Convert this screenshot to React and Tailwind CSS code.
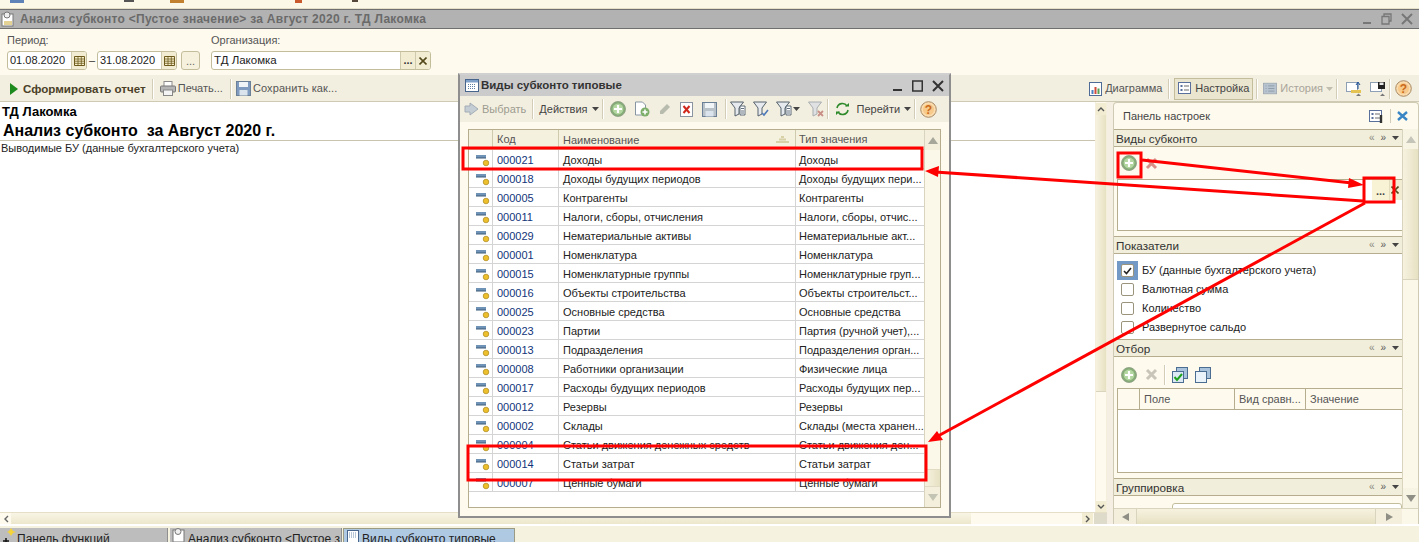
import React from "react";

const rows = [
  ["000021", "Доходы", "Доходы"],
  ["000018", "Доходы будущих периодов", "Доходы будущих пери..."],
  ["000005", "Контрагенты", "Контрагенты"],
  ["000011", "Налоги, сборы, отчисления", "Налоги, сборы, отчис..."],
  ["000029", "Нематериальные активы", "Нематериальные акт..."],
  ["000001", "Номенклатура", "Номенклатура"],
  ["000015", "Номенклатурные группы", "Номенклатурные груп..."],
  ["000016", "Объекты строительства", "Объекты строительст..."],
  ["000025", "Основные средства", "Основные средства"],
  ["000023", "Партии", "Партия (ручной учет),..."],
  ["000013", "Подразделения", "Подразделения орган..."],
  ["000008", "Работники организации", "Физические лица"],
  ["000017", "Расходы будущих периодов", "Расходы будущих пер..."],
  ["000012", "Резервы", "Резервы"],
  ["000002", "Склады", "Склады (места хранен..."],
  ["000004", "Статьи движения денежных средств", "Статьи движения ден..."],
  ["000014", "Статьи затрат", "Статьи затрат"],
  ["000007", "Ценные бумаги", "Ценные бумаги"],
];

const Plus = () => (
  <svg width="16" height="16" viewBox="0 0 16 16" className="shrink-0">
    <circle cx="8" cy="8" r="7.5" fill="#86ad78" stroke="#8a9a80" strokeWidth="0.8" />
    <circle cx="8" cy="8" r="5.4" fill="#b4d6a0" />
    <path d="M8 4v8M4 8h8" stroke="#fff" strokeWidth="2.2" />
  </svg>
);
const Cross = ({ color = "#d98f86" }) => (
  <svg width="13" height="13" viewBox="0 0 13 13" className="shrink-0">
    <path d="M2 2l9 9M11 2l-9 9" stroke={color} strokeWidth="3" />
  </svg>
);
const Calendar = () => (
  <svg width="11" height="11" viewBox="0 0 11 11">
    <path d="M0.5 1.5h10v9h-10z" fill="#f6edc9" stroke="#6d5a1c" />
    <path d="M0.5 4h10M0.5 6.2h10M0.5 8.3h10M4 1.5v9M7.3 1.5v9" stroke="#6d5a1c" strokeWidth="0.8" />
  </svg>
);
const RowIcon = () => (
  <svg width="15" height="15" viewBox="0 0 15 15" className="shrink-0">
    <rect x="0" y="3" width="10" height="3" fill="#6f93b7" />
    <rect x="0" y="5.5" width="10" height="1" fill="#3d5a78" />
    <circle cx="10" cy="11" r="2.8" fill="#eebf2c" stroke="#a8861c" strokeWidth="0.7" />
  </svg>
);
const Help = () => (
  <svg width="17" height="17" viewBox="0 0 17 17" className="shrink-0">
    <circle cx="8.5" cy="8.5" r="7.8" fill="#fbdcae" stroke="#a88a66" />
    <circle cx="8.5" cy="8.5" r="5.5" fill="#f7c98a" />
    <text x="8.5" y="12.6" textAnchor="middle" fontSize="12" fontWeight="700" fill="#c9691c" fontFamily="Liberation Sans">?</text>
  </svg>
);
const Disk = ({ c = "#7f9cc0" }) => (
  <svg width="15" height="15" viewBox="0 0 15 15" className="shrink-0">
    <rect x="0.5" y="0.5" width="14" height="14" fill={c} stroke="#6b7f96" />
    <rect x="3" y="1" width="9" height="5" fill="#f2f5f8" />
    <rect x="3.5" y="9" width="8" height="5.5" fill="#dbe3ec" />
  </svg>
);
const Printer = () => (
  <svg width="16" height="15" viewBox="0 0 16 15" className="shrink-0">
    <rect x="4" y="0.5" width="8" height="5" fill="#fff" stroke="#8b8b8b" />
    <rect x="0.5" y="5" width="15" height="6" rx="1" fill="#b5b5b5" stroke="#777" />
    <rect x="3.5" y="9" width="9" height="5.5" fill="#f4f4f4" stroke="#888" />
  </svg>
);
const Diagram = () => (
  <svg width="13" height="14" viewBox="0 0 13 14" className="shrink-0">
    <rect x="0.5" y="0.5" width="12" height="13" fill="#fff" stroke="#4d6b96" />
    <rect x="2.5" y="8" width="2" height="4" fill="#4a7fc0" />
    <rect x="5.5" y="5" width="2" height="7" fill="#d14b3c" />
    <rect x="8.5" y="6.5" width="2" height="5.5" fill="#5aa050" />
  </svg>
);
const Settings = ({ wrench }) => (
  <svg width="15" height="13" viewBox="0 0 15 13" className="shrink-0">
    <rect x="0.5" y="0.5" width="12" height="11" fill="#fff" stroke="#5a6f9c" />
    <path d="M2.5 3h2v2h-2zM2.5 7h2v2h-2z" fill="#5a6f9c" />
    <path d="M6 4h5M6 8h5" stroke="#6a6a6a" />
    {wrench && <path d="M12 5v8" stroke="#333" strokeWidth="2.4" />}
  </svg>
);
const Funnel = ({ mark, dim }) => (
  <svg width="16" height="16" viewBox="0 0 16 16" className="shrink-0">
    <path d="M0.5 1h13l-4.5 6v6l-4 2V7z" fill={dim ? "#dfe1e3" : "#e6eaee"} stroke={dim ? "#a9adb1" : "#55616d"} />
    {mark === "x" && <path d="M10 10l5 5M15 10l-5 5" stroke="#c98f86" strokeWidth="1.8" />}
    {mark === "check" && <path d="M9 12l2 2 4-5" stroke="#4f79b8" strokeWidth="1.6" fill="none" />}
    {mark === "list" && <path d="M10 5h5v9h-5zM11 7.5h3M11 10h3M11 12h3" stroke="#39495a" fill="#fff" strokeWidth="0.8" />}
  </svg>
);
const Sep = () => <div className="h-[20px] w-[2px] border-l border-[#d3cdb8] bg-white mx-[3px] shrink-0" />;
const Caret = ({ c = "#444" }) => (
  <svg width="7" height="4" viewBox="0 0 7 4" className="shrink-0"><path d="M0 0h7L3.5 4z" fill={c} /></svg>
);

const SectionHead = ({ title }) => (
  <div className="h-[16px] flex items-center justify-between bg-[#f1eedb] border-y border-[#b5ad8d] box-content text-[11.7px] text-[#333] pl-[2px] pr-[3px] shrink-0 leading-[17px]">
    <span className="pt-[1px]">{title}</span>
    <span className="flex items-center gap-[6px] text-[10px] leading-none text-[#555]">
      <span className="text-[#8a8a80]">«</span><span>»</span><Caret />
    </span>
  </div>
);

const Checkbox = ({ label, checked }) => (
  <div className="h-[19px] flex items-center text-[11px] text-[#222]">
    <span className={`w-[21px] h-[19px] ml-[3px] flex items-center justify-center ${checked ? "bg-[#7399c6]" : ""}`}>
      <span className="w-[13px] h-[13px] border border-[#9a947c] rounded-[2px] bg-white flex items-center justify-center">
        {checked && (
          <svg width="9" height="8" viewBox="0 0 9 8"><path d="M1 4l2.5 2.5L8 1" stroke="#222" strokeWidth="1.6" fill="none" /></svg>
        )}
      </span>
    </span>
    <span className="ml-[4px]">{label}</span>
  </div>
);

const Dialog = () => (
  <div className="absolute left-[458px] top-[73px] w-[493px] h-[445px] flex flex-col border-2 border-[#8e8e8e] border-t-[#d0d0d0] bg-[#fefaee]">
    <div className="h-[21px] flex items-center bg-[#cbcbcb] pl-[5px] pr-[5px] shrink-0">
      <svg width="14" height="13" viewBox="0 0 14 13" className="shrink-0">
        <rect x="0.5" y="0.5" width="13" height="12" fill="#fff" stroke="#46648c" />
        <rect x="1" y="1" width="12" height="2.5" fill="#7ea0c8" />
        <path d="M3 5.5h8M3 7.5h8M3 9.5h8" stroke="#5f7ea3" strokeDasharray="1 1" />
      </svg>
      <span className="ml-[2px] text-[11.5px] font-bold text-[#333]">Виды субконто типовые</span>
      <span className="ml-auto flex items-center gap-[9px]">
        <svg width="10" height="12" viewBox="0 0 10 12"><path d="M0 10h9" stroke="#333" strokeWidth="2" /></svg>
        <svg width="11" height="12" viewBox="0 0 11 12"><rect x="0.75" y="1" width="9.5" height="10" fill="none" stroke="#333" strokeWidth="1.5" /></svg>
        <svg width="12" height="12" viewBox="0 0 12 12"><path d="M1 1l10 10M11 1L1 11" stroke="#333" strokeWidth="2" /></svg>
      </span>
    </div>
    <div className="h-[26px] flex items-center bg-[#f3efe0] pl-[3px] text-[11px] shrink-0">
      <svg width="16" height="15" viewBox="0 0 16 15" className="shrink-0 ml-[1px]"><path d="M1 4h5V1l8 6-8 6v-3H1z" fill="#c5cdd4" stroke="#a2acb5" /></svg>
      <span className="ml-[2px] text-[#9c9c90]">Выбрать</span>
      <span className="ml-[3px]"><Sep /></span>
      <span className="ml-[2px] text-[#444]">Действия</span>
      <span className="ml-[4px]"><Caret /></span>
      <Sep />
      <span className="ml-[3px]"><Plus /></span>
      <svg width="16" height="16" viewBox="0 0 16 16" className="ml-[8px] shrink-0">
        <path d="M1.5 1h7l3 3v10h-10z" fill="#fff" stroke="#8795a3" />
        <circle cx="11" cy="11" r="4.5" fill="#7eaf6a" />
        <path d="M11 8.5v5M8.5 11h5" stroke="#fff" strokeWidth="1.6" />
      </svg>
      <svg width="14" height="14" viewBox="0 0 14 14" className="ml-[8px] shrink-0"><path d="M2 9l7-7 3 3-7 7H2z" fill="#b8bcae" /></svg>
      <svg width="13" height="15" viewBox="0 0 13 15" className="ml-[8px] shrink-0">
        <rect x="0.5" y="0.5" width="12" height="14" fill="#fff" stroke="#8a94a0" />
        <path d="M3.5 4l6 7M9.5 4l-6 7" stroke="#d0281c" strokeWidth="2" />
      </svg>
      <span className="ml-[9px]"><Disk c="#b9c1c9" /></span>
      <span className="ml-[5px]"><Sep /></span>
      <Funnel mark="list" />
      <span className="ml-[7px]"><Funnel mark="check" /></span>
      <span className="ml-[7px]"><Funnel mark="list" /></span>
      <span className="ml-[1px]"><Caret /></span>
      <span className="ml-[8px]"><Funnel mark="x" dim /></span>
      <Sep />
      <svg width="15" height="14" viewBox="0 0 15 14" className="ml-[3px] shrink-0">
        <path d="M2 6a5.5 5.5 0 0 1 10-2M13 8a5.5 5.5 0 0 1-10 2" stroke="#2f8a2c" strokeWidth="1.6" fill="none" />
        <path d="M10 4.5h4V1zM5 9.5H1V13z" fill="#2f8a2c" />
      </svg>
      <span className="ml-[7px] text-[#444]">Перейти</span>
      <span className="ml-[4px]"><Caret /></span>
      <Sep />
      <span className="ml-[1px]"><Help /></span>
    </div>
    <div className="flex-1 min-h-0 px-[8px] pt-[7px] pb-[8px]">
      <div className="h-full flex border border-[#b5ad8d] bg-white">
        <div className="flex-1 min-w-0 flex flex-col">
          <div className="h-[20px] flex bg-[#f5f1df] border-b border-[#cfc9ae] text-[11px] text-[#555] shrink-0">
            <div className="w-[24px] border-r border-[#cfc9ae]" />
            <div className="w-[66px] border-r border-[#cfc9ae] pl-[4px] leading-[18px]">Код</div>
            <div className="w-[237px] border-r border-[#cfc9ae] pl-[4px] leading-[18px] flex items-center justify-between pr-[6px]">
              <span>Наименование</span>
              <svg width="13" height="7" viewBox="0 0 13 7"><path d="M5 0h3v2H5zM3 2.5h7v2H3zM0 5h13v2H0z" fill="#d8d0a6" /></svg>
            </div>
            <div className="flex-1 pl-[3px] leading-[18px]">Тип значения</div>
          </div>
          {rows.map((r) => (
            <div key={r[0]} className="h-[19px] flex border-b border-[#d4d4d4] text-[11px] text-[#222] shrink-0 leading-[20px]">
              <div className="w-[24px] border-r border-[#d4d4d4] flex items-center pl-[7px]"><RowIcon /></div>
              <div className="w-[66px] border-r border-[#d4d4d4] pl-[4px] text-[#12357a]">{r[0]}</div>
              <div className="w-[237px] border-r border-[#d4d4d4] pl-[4px] whitespace-nowrap overflow-hidden">{r[1]}</div>
              <div className="flex-1 pl-[3px] whitespace-nowrap overflow-hidden">{r[2]}</div>
            </div>
          ))}
        </div>
        <div className="w-[16px] flex flex-col bg-[#f7f4e4] border-l border-[#d9d4bd] shrink-0">
          <div className="h-[20px] flex items-center justify-center bg-[#f3efdc]">
            <div className="w-0 h-0 border-x-[5px] border-x-transparent border-b-[7px] border-b-[#a6a69a]" />
          </div>
          <div className="flex-1 bg-[#fbf8ea]" />
          <div className="h-[18px] bg-gradient-to-r from-[#f6f2df] to-[#e7e1c3] border-y border-[#e0dbc2]" />
          <div className="h-[20px] flex items-center justify-center bg-[#f3efdc]">
            <div className="w-0 h-0 border-x-[5px] border-x-transparent border-t-[7px] border-t-[#c4c4b4]" />
          </div>
        </div>
      </div>
    </div>
  </div>
);

const Overlay = () => (
  <svg width="1419" height="542" viewBox="0 0 1419 542" className="absolute left-0 top-0 pointer-events-none">
    <g fill="none" stroke="#ff0000" strokeWidth="3">
      <rect x="463" y="148" width="459" height="21" />
      <rect x="468" y="446" width="458" height="34" />
      <rect x="1118" y="153" width="23" height="24" />
      <rect x="1364" y="178" width="30" height="24" />
      <path d="M1142 160L1352 183" />
      <path d="M1363 201L935 172" />
      <path d="M1365 203L938 436" />
    </g>
    <g fill="#ff0000">
      <path d="M1364 185L1349 178L1348 188z" />
      <path d="M925 171L939 166L938 177z" />
      <path d="M928 442L937 431L943 440z" />
    </g>
  </svg>
);

export default function App() {
  return (
    <div className="relative w-[1419px] h-[542px] overflow-hidden flex flex-col bg-[#f5f2e0] font-['Liberation_Sans',sans-serif]">
      <div className="h-[9px] bg-[#fbf8e8] border-b border-[#e3dfc8] flex items-start pl-[10px] shrink-0 overflow-hidden">
        <div className="w-[14px] h-[3px] bg-[#5d83b8]" />
        <div className="ml-[100px] w-[10px] h-[2px] bg-[#555]" />
        <div className="ml-[36px] w-[14px] h-[3px] bg-[#c2812e]" />
        <div className="ml-[111px] w-[7px] h-[3px] bg-[#c85a2e]" />
        <div className="ml-[50px] w-[6px] h-[2px] bg-[#55483a]" />
      </div>
      <div className="h-[20px] flex items-center bg-[#b2b2b2] border-y border-[#6f6f6f] shrink-0 pl-[1px] pr-[6px]">
        <svg width="16" height="16" viewBox="0 0 16 16" className="shrink-0">
          <rect x="1" y="3" width="11" height="12" fill="#fff" stroke="#777" />
          <circle cx="6" cy="4" r="3" fill="#eee" stroke="#777" />
          <path d="M3 11h8M3 13h8" stroke="#c9a52c" />
        </svg>
        <span className="ml-[3px] text-[12px] tracking-[0.27px] font-bold text-[#6a6a6a]">Анализ субконто &lt;Пустое значение&gt; за Август 2020 г. ТД Лакомка</span>
        <span className="ml-auto flex items-center gap-[9px]">
          <svg width="10" height="12" viewBox="0 0 10 12"><path d="M1 10h8" stroke="#777" strokeWidth="2" /></svg>
          <svg width="11" height="12" viewBox="0 0 11 12"><path d="M3 3V1h7v7H8M1 3.5h7V11H1z" fill="none" stroke="#777" strokeWidth="1.3" /></svg>
          <svg width="12" height="12" viewBox="0 0 12 12"><path d="M1 1l10 10M11 1L1 11" stroke="#777" strokeWidth="2" /></svg>
        </span>
      </div>
      <div className="h-[46px] bg-[#fefaee] pl-[7px] flex shrink-0 text-[11px] text-[#555]">
        <div className="flex flex-col pt-[5px]">
          <span className="h-[13px] leading-[13px]">Период:</span>
          <div className="flex items-center mt-[4px]">
            <div className="w-[80px] h-[19px] flex border border-[#c4bd9b] rounded-[3px] bg-white overflow-hidden text-[#222]">
              <span className="flex-1 pl-[2px] leading-[17px]">01.08.2020</span>
              <span className="w-[15px] bg-[#f1ecd2] border-l border-[#cfc9ae] flex items-center justify-center"><Calendar /></span>
            </div>
            <span className="w-[10px] text-center text-[#333]">–</span>
            <div className="w-[80px] h-[19px] flex border border-[#c4bd9b] rounded-[3px] bg-white overflow-hidden text-[#222]">
              <span className="flex-1 pl-[2px] leading-[17px]">31.08.2020</span>
              <span className="w-[15px] bg-[#f1ecd2] border-l border-[#cfc9ae] flex items-center justify-center"><Calendar /></span>
            </div>
            <span className="ml-[4px] w-[19px] h-[19px] border border-[#c4bd9b] rounded-[3px] bg-[#f5f1dc] text-center leading-[18px] text-[#666]">...</span>
          </div>
        </div>
        <div className="flex flex-col pt-[5px] ml-[11px]">
          <span className="h-[13px] leading-[13px]">Организация:</span>
          <div className="w-[220px] h-[19px] flex mt-[4px] border border-[#c4bd9b] rounded-[3px] bg-white overflow-hidden text-[#222]">
            <span className="flex-1 pl-[2px] leading-[17px] text-[11.5px]">ТД Лакомка</span>
            <span className="w-[15px] bg-[#f1ecd2] border-l border-[#cfc9ae] text-center font-bold leading-[17px] text-[#333]">...</span>
            <span className="w-[15px] bg-[#f1ecd2] border-l border-[#cfc9ae] flex items-center justify-center">
              <svg width="8" height="8" viewBox="0 0 8 8"><path d="M0.5 0.5l7 7M7.5 0.5l-7 7" stroke="#55491c" strokeWidth="1.6" /></svg>
            </span>
          </div>
        </div>
      </div>
      <div className="h-[27px] pt-[1px] bg-[#f3efe0] border-b border-[#cfcab3] flex items-center text-[11px] text-[#555] shrink-0 pr-[7px]">
        <svg width="8" height="12" viewBox="0 0 8 12" className="ml-[10px] shrink-0"><path d="M0 0l8 6-8 6z" fill="#1c8a1c" /></svg>
        <span className="ml-[5px] font-bold text-[#4a4028] text-[11.6px]">Сформировать отчет</span>
        <span className="ml-[3px]"><Sep /></span>
        <span className="ml-[3px]"><Printer /></span>
        <span className="ml-[2px]">Печать...</span>
        <span className="ml-[4px]"><Sep /></span>
        <span className="ml-[1px]"><Disk /></span>
        <span className="ml-[2px] tracking-[0.1px]">Сохранить как...</span>
        <span className="ml-auto flex items-center">
          <Diagram />
          <span className="ml-[3px]">Диаграмма</span>
          <span className="ml-[3px]"><Sep /></span>
          <span className="h-[22px] w-[79px] ml-[1px] border border-[#c4bd9b] bg-[#e9e5cf] flex items-center justify-center gap-[2px] text-[#444]">
            <Settings />Настройка
          </span>
          <Sep />
          <svg width="14" height="13" viewBox="0 0 16 13" className="ml-[2px] shrink-0">
            <rect x="0.5" y="0.5" width="15" height="12" fill="#b7c3cf" stroke="#a0aab4" />
            <path d="M3 3.5h1M6 3.5h7M3 6.5h1M6 6.5h7M3 9.5h1M6 9.5h7" stroke="#8a98a6" />
          </svg>
          <span className="ml-[3px] text-[#a8a49a]">История</span>
          <span className="ml-[3px]"><Caret c="#c0bcae" /></span>
          <Sep />
          <svg width="16" height="16" viewBox="0 0 16 16" className="ml-[5px] shrink-0">
            <rect x="0.5" y="1.5" width="11" height="9" fill="#fff" stroke="#8da0b6" />
            <path d="M5 9h10v3H5z" fill="#e4c352" />
            <path d="M12 8V2M10 4l2-3 2 3" stroke="#1c4f96" fill="none" />
            <path d="M10 15h5l-2.5-2.5z" fill="#777" />
          </svg>
          <svg width="16" height="16" viewBox="0 0 16 16" className="ml-[8px] shrink-0">
            <rect x="0.5" y="1.5" width="11" height="9" fill="#fff" stroke="#8da0b6" />
            <rect x="8" y="1" width="7" height="7" fill="#222" />
            <rect x="9.5" y="1.5" width="4" height="2.5" fill="#e9e9e9" />
            <path d="M10 15h5l-2.5-2.5z" fill="#777" />
          </svg>
          <Sep />
          <span className="ml-[1px]"><Help /></span>
        </span>
      </div>
      <div className="flex-1 min-h-0 flex">
        <div className="flex-1 min-w-0 flex flex-col bg-white">
          <div className="flex-1 min-h-0 flex">
            <div className="flex-1 min-w-0 text-black">
              <div className="pl-[2px] h-[17px] leading-[19px] text-[13px] font-bold">ТД Лакомка</div>
              <div className="pl-[3px] h-[22px] leading-[24px] text-[16px] font-bold border-b border-[#c9c4ae] whitespace-pre">Анализ субконто  за Август 2020 г.</div>
              <div className="pl-[1px] text-[11px] leading-[15px] text-[#222]">Выводимые БУ (данные бухгалтерского учета)</div>
            </div>
            <div className="w-[12px] shrink-0 flex flex-col bg-[#fefaee] border-x border-[#f3efdc] pt-[1px]">
              <div className="h-[12px] flex items-center justify-center bg-[#f1ecd2]">
                <svg width="8" height="5" viewBox="0 0 8 5"><path d="M1 4l3-3 3 3" stroke="#555" strokeWidth="1.4" fill="none" /></svg>
              </div>
              <div className="h-[277px] bg-gradient-to-r from-[#f6f2df] to-[#e7e1c3] border-b border-[#d9d4bd]" />
              <div className="flex-1" />
              <div className="h-[11px] flex items-center justify-center bg-[#f1ecd2]">
                <svg width="8" height="5" viewBox="0 0 8 5"><path d="M1 1l3 3 3-3" stroke="#555" strokeWidth="1.4" fill="none" /></svg>
              </div>
            </div>
          </div>
          <div className="h-[12px] flex items-stretch bg-[#fefaee] border-t border-[#e4dfc6] shrink-0">
            <div className="w-[11px] flex items-center justify-center">
              <svg width="6" height="8" viewBox="0 0 6 8"><path d="M5 1L2 4l3 3" stroke="#666" strokeWidth="1.4" fill="none" /></svg>
            </div>
            <div className="w-[960px] bg-gradient-to-b from-[#f8f5e5] to-[#ece7cc]" />
            <div className="flex-1" />
            <div className="w-[11px] flex items-center justify-center bg-[#f1ecd2]">
              <svg width="6" height="8" viewBox="0 0 6 8"><path d="M1 1l3 3-3 3" stroke="#555" strokeWidth="1.4" fill="none" /></svg>
            </div>
            <div className="w-[13px] ml-[1px] bg-[#dedbcb]" />
          </div>
        </div>
        <div className="w-[6px] bg-[#f5efe3] shrink-0" />
        <div className="w-[306px] shrink-0 flex flex-col bg-[#fefaee] border-x border-t border-[#cfcab3] rounded-t-[4px]">
          <div className="h-[26px] flex items-center pl-[9px] pr-[10px] text-[11px] text-[#444] shrink-0">
            <span>Панель настроек</span>
            <span className="ml-auto flex items-center">
              <Settings wrench />
              <div className="w-px h-[14px] bg-[#d3cdb8] mx-[6px]" />
              <svg width="11" height="10" viewBox="0 0 11 10"><path d="M1 1l9 8M10 1l-9 8" stroke="#3a86c4" strokeWidth="2.4" /></svg>
            </span>
          </div>
          <div className="flex-1 min-h-0 flex">
            <div className="flex-1 min-w-0 flex flex-col">
              <SectionHead title="Виды субконто" />
              <div className="h-[32px] flex items-center pl-[7px] gap-[8px] shrink-0"><Plus /><Cross /></div>
              <div className="h-[52px] ml-[3px] bg-white border-y border-l border-[#b5ad8d] shrink-0 flex justify-end">
                <div className="h-[20px] flex text-[11px]">
                  <span className="w-[17px] bg-[#f8f3d4] text-center font-bold text-[#444] leading-[22px]">...</span>
                  <span className="w-[13px] bg-[#f1ecd2] flex items-center justify-center border-l border-[#e3ddbd] pr-[3px]">
                    <svg width="8" height="8" viewBox="0 0 8 8"><path d="M0.5 0.5l7 7M7.5 0.5l-7 7" stroke="#55491c" strokeWidth="1.6" /></svg>
                  </span>
                </div>
              </div>
              <div className="h-[5px] shrink-0" />
              <SectionHead title="Показатели" />
              <div className="h-[85px] bg-white pt-[7px] shrink-0 overflow-hidden">
                <Checkbox label="БУ (данные бухгалтерского учета)" checked />
                <Checkbox label="Валютная сумма" />
                <Checkbox label="Количество" />
                <Checkbox label="Развернутое сальдо" />
              </div>
              <SectionHead title="Отбор" />
              <div className="h-[31px] pt-[4px] flex items-center pl-[7px] shrink-0">
                <Plus />
                <span className="ml-[8px]"><Cross color="#c9c5b9" /></span>
                <span className="ml-[3px]"><Sep /></span>
                <svg width="16" height="16" viewBox="0 0 16 16" className="ml-[3px] shrink-0">
                  <rect x="4.5" y="0.5" width="11" height="11" fill="#a9c3dd" stroke="#4c6d92" />
                  <rect x="0.5" y="4.5" width="11" height="11" fill="#dce9f5" stroke="#4c6d92" />
                  <path d="M2.5 10l2.5 3 5-6" stroke="#1fa31f" strokeWidth="2" fill="none" />
                </svg>
                <svg width="16" height="16" viewBox="0 0 16 16" className="ml-[7px] shrink-0">
                  <rect x="4.5" y="0.5" width="11" height="11" fill="#a9c3dd" stroke="#4c6d92" />
                  <rect x="0.5" y="4.5" width="11" height="11" fill="#eaf2fa" stroke="#4c6d92" />
                </svg>
              </div>
              <div className="h-[85px] ml-[3px] border-y border-l border-[#b5ad8d] bg-white shrink-0 flex flex-col">
                <div className="h-[21px] flex bg-[#fefaee] border-b border-[#b5ad8d] text-[11px] text-[#555] leading-[20px]">
                  <div className="w-[22px] border-r border-[#b5ad8d]" />
                  <div className="w-[95px] border-r border-[#b5ad8d] pl-[4px]">Поле</div>
                  <div className="w-[71px] border-r border-[#b5ad8d] pl-[4px]">Вид сравн...</div>
                  <div className="flex-1 pl-[4px]">Значение</div>
                </div>
              </div>
              <div className="h-[5px] shrink-0" />
              <SectionHead title="Группировка" />
              <div className="flex-1 min-h-0 overflow-hidden flex text-[11px] pl-[3px]">
                <div className="ml-[55px] mt-[7px] flex-1 h-[20px] border border-[#c4bd9b] rounded-[3px] bg-white" />
              </div>
            </div>
            <div className="w-[16px] shrink-0 flex flex-col bg-[#f7f4e4] border-l border-[#d9d4bd]">
              <div className="h-[20px] flex items-center justify-center">
                <div className="w-0 h-0 border-x-[5px] border-x-transparent border-b-[7px] border-b-[#c4c4b8]" />
              </div>
              <div className="h-[131px] bg-gradient-to-r from-[#f6f2df] to-[#e7e1c3] border-b border-[#d9d4bd]" />
              <div className="flex-1 bg-[#fbf8ea]" />
              <div className="h-[20px] flex items-center justify-center">
                <div className="w-0 h-0 border-x-[5px] border-x-transparent border-t-[7px] border-t-[#8f8f86]" />
              </div>
            </div>
          </div>
          <div className="h-[16px] flex items-center bg-[#f3efdc] border-t border-[#d9d4bd] shrink-0">
            <div className="w-[22px] flex justify-center"><div className="w-0 h-0 border-y-[4px] border-y-transparent border-r-[7px] border-r-[#8f8f86]" /></div>
            <div className="flex-1 h-full bg-gradient-to-b from-[#f6f2df] to-[#e7e1c3] border-x border-[#d9d4bd]" />
            <div className="w-[26px] flex justify-center"><div className="w-0 h-0 border-y-[4px] border-y-transparent border-l-[7px] border-l-[#8f8f86]" /></div>
            <div className="w-[16px] h-full bg-[#fbf8ea]" />
          </div>
        </div>
      </div>
      <div className="h-[18px] bg-[#f5f2e0] border-t-2 border-white flex items-end text-[12px] text-[#222] shrink-0 overflow-hidden">
        <div className="w-[168px] h-[14px] bg-[#bdbdbd] border-r border-[#8f8f8f] pl-[3px] flex gap-[1px] leading-[22px]">
          <svg width="13" height="14" viewBox="0 0 13 14" className="shrink-0"><path d="M8 0l2 3 3 1-3 1-2 3-2-3-2-1 2-1z" fill="#f5d33c" /><path d="M0 13h6M3 10v6" stroke="#111" strokeWidth="1.5" /></svg>
          Панель функций
        </div>
        <div className="w-[172px] h-[14px] ml-[2px] bg-[#bdbdbd] border-r border-[#8f8f8f] pl-[2px] flex gap-[1px] leading-[22px]">
          <svg width="15" height="14" viewBox="0 0 15 14" className="shrink-0"><rect x="1" y="2" width="11" height="12" fill="#fff" stroke="#777" /><circle cx="6" cy="3.5" r="3" fill="#eee" stroke="#777" /></svg>
          Анализ субконто &lt;Пустое з
        </div>
        <div className="w-[172px] h-[14px] ml-[1px] bg-[#b0c9e3] border-t border-x border-[#9b9b84] pl-[3px] flex gap-[3px] leading-[21px]">
          <svg width="12" height="14" viewBox="0 0 12 14" className="shrink-0"><rect x="0.5" y="1.5" width="11" height="12" fill="#fff" stroke="#46648c" /><path d="M2 4h8M2 6h8M2 8h8" stroke="#6f8db0" strokeDasharray="1 1" /></svg>
          Виды субконто типовые
        </div>
      </div>
      <Dialog />
      <Overlay />
    </div>
  );
}
